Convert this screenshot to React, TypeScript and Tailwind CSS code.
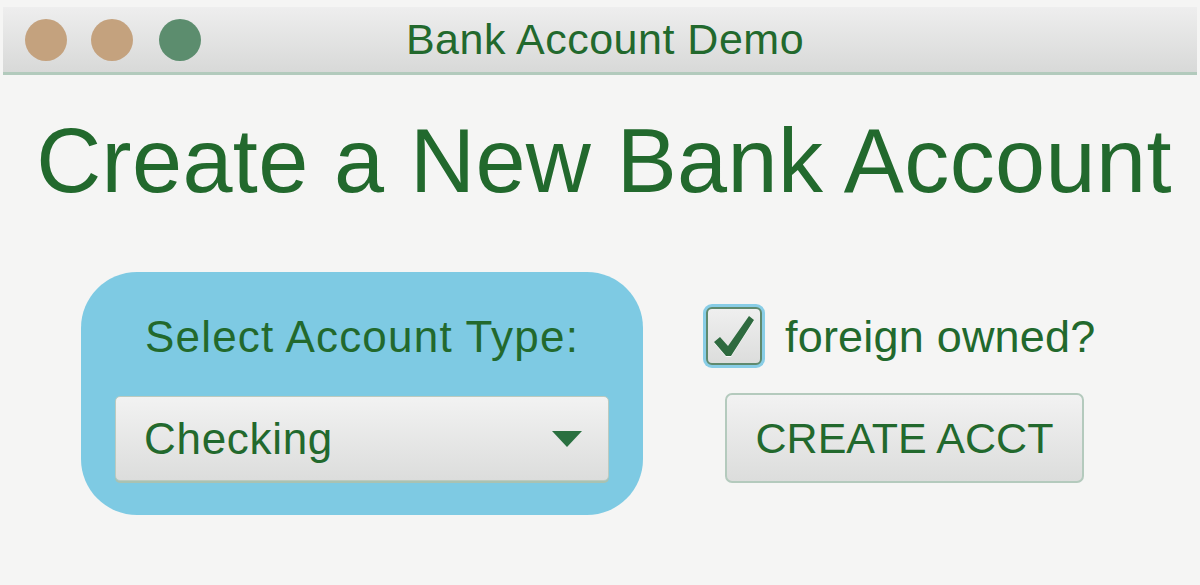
const green = 'text-[#22692d]';

function TrafficLights() {
    return (
        <div className="flex items-center pl-[22px]">
            <span className="w-[42px] h-[42px] rounded-full bg-[#c4a27e]" />
            <span className="w-[42px] h-[42px] rounded-full bg-[#c4a27e] ml-[24px]" />
            <span className="w-[42px] h-[42px] rounded-full bg-[#5c8d6e] ml-[26px]" />
        </div>
    );
}

function CheckMark() {
    return (
        <svg width="42" height="44" viewBox="0 0 42 44">
            <path d="M1 29 L7 24 L15 34 L36 3 L41 7 L18 43 L13 43 Z" fill="#ffffff" opacity="0.8" />
            <path d="M1 28 L7 23 L15 32 L36 2 L41 6 L18 42 L13 42 Z" fill="#2e6a3f" />
        </svg>
    );
}

export default function App() {
    return (
        <div
            className="w-full h-[585px] overflow-hidden bg-[#f5f5f4] pt-[7px] px-[3px]"
            style={{ fontFamily: '"Liberation Sans", Arial, sans-serif' }}
        >
            {/* title bar */}
            <div className="grid grid-cols-[1fr_auto_1fr] items-center h-[68px] bg-gradient-to-b from-[#eeeeee] to-[#d8d9d8] border-b-[3px] border-[#b2cabc]">
                <TrafficLights />
                <div className={`text-[43px] leading-none tracking-[0.5px] pl-[10px] ${green}`}>Bank Account Demo</div>
                <div />
            </div>

            <h1 className={`mt-[41px] pl-[8px] text-center text-[90px] leading-none tracking-[0.4px] ${green}`}>Create a New Bank Account</h1>

            <div className="flex items-start mt-[66px] ml-[78px] gap-[60px]">
                {/* account type panel */}
                <div className="w-[562px] h-[243px] rounded-[56px] bg-[#7ecae3] px-[34px] pt-[43px] flex flex-col items-center">
                    <div className={`text-[44px] leading-none tracking-[1.2px] ${green}`}>Select Account Type:</div>
                    <div className="mt-[37px] w-full h-[85px] rounded-[5px] border border-[#bccabf] bg-gradient-to-b from-[#f2f2f2] to-[#dcdddc] shadow-[0_2px_0_#a9c2b2] flex items-center justify-between pl-[28px] pr-[26px]">
                        <span className={`text-[44px] leading-none tracking-[0.7px] ${green}`}>Checking</span>
                        <svg width="30" height="16" viewBox="0 0 30 16">
                            <path d="M0 0 H30 L15 16 Z" fill="#2a7040" />
                        </svg>
                    </div>
                </div>

                {/* right column */}
                <div className="flex flex-col items-start pt-[32px]">
                    <div className="flex items-center gap-[20px]">
                        <div className="w-[62px] h-[64px] rounded-[9px] bg-[#88cde6] p-[3px] flex">
                            <div className="flex-1 rounded-[6px] border-2 border-[#5f8a6e] bg-gradient-to-b from-[#efefef] to-[#dcdddc] flex items-center justify-center">
                                <CheckMark />
                            </div>
                        </div>
                        <span className={`text-[45px] leading-none tracking-[0.2px] ${green}`}>foreign owned?</span>
                    </div>
                    <button className={`mt-[25px] ml-[22px] w-[359px] h-[90px] rounded-[7px] border-2 border-[#b4cabd] bg-gradient-to-b from-[#f2f2f2] to-[#dcdddc] text-[43px] leading-none ${green}`}>
                        CREATE ACCT
                    </button>
                </div>
            </div>
        </div>
    );
}
